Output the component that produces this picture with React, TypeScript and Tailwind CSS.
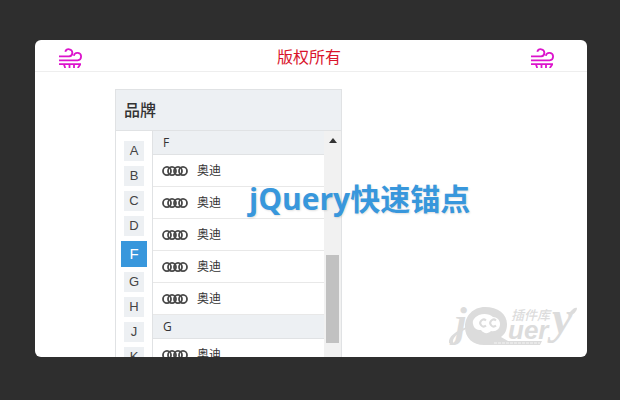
import React, { useState } from 'react'

interface Group {
  letter: string
  brands: string[]
}

const letters = ['A', 'B', 'C', 'D', 'F', 'G', 'H', 'J', 'K']

const groups: Group[] = [
  { letter: 'F', brands: ['奥迪', '奥迪', '奥迪', '奥迪', '奥迪'] },
  { letter: 'G', brands: ['奥迪'] },
]

const WindIcon: React.FC = () => (
  <svg width="24" height="20" viewBox="0 0 24 20" fill="none" stroke="#dc14cc" strokeWidth="1.8">
    <path d="M1 8.4h10.2a3.6 3.6 0 1 0-3.9-4.6" />
    <path d="M1 12.3h18.6a3.7 3.7 0 1 0-3.8-4.6" />
    <path d="M1 16.2h22" />
    <path d="M6 16.5l1.2 3.5M11.5 16.5v3.5M16 16.5v3.5M22.2 16.5l-2.4 3.5" />
  </svg>
)

const RingsIcon: React.FC = () => (
  <svg width="26" height="12" viewBox="0 0 26 12" fill="none" stroke="#484848" strokeWidth="1.8">
    {[5, 10, 16, 21].map(cx => (
      <ellipse key={cx} cx={cx} cy="6" rx="4" ry="4.2" />
    ))}
  </svg>
)

const Watermark: React.FC = () => (
  <svg width="134" height="50" viewBox="0 0 134 50" fill="#dcdcdc" aria-label="jQuery 插件库">
    <text
      x="9"
      y="33"
      fontSize="42"
      fontStyle="italic"
      fontWeight="700"
      fontFamily="'Liberation Serif', serif"
    >
      j
    </text>
    <path d="M3 40c-1-6 6-12 20-17l-1 2C11 30 6 35 7 40z" />
    <path
      fillRule="evenodd"
      d="M39 4c13 0 22 7 22 17 0 6-2 10-6 13l7 4h34l-2 4H38c-11 0-19-7-19-18S27 4 39 4zM33 12c-4 2-7 5-6 9s3 6 8 6c3 4 7 4 10 1 5 1 9-2 9-7 0-4-3-7-7-7-3-3-9-4-14-2z"
    />
    <g fill="none" stroke="#dcdcdc" strokeWidth="2">
      <path d="M40 17.5a3.4 3.4 0 1 0 0 5" />
      <path d="M50 17.5a3.4 3.4 0 1 0 0 5" />
    </g>
    <path d="M48 40h46" stroke="#f4f4f4" strokeWidth="1" strokeDasharray="3 1" />
    <text
      x="62"
      y="36"
      fontSize="26"
      fontWeight="700"
      fontStyle="italic"
      fontFamily="'Liberation Sans', sans-serif"
    >
      uer
    </text>
    <text
      x="65"
      y="17"
      fontSize="13"
      fontWeight="500"
      fontStyle="italic"
      fontFamily="'Noto Sans CJK SC', sans-serif"
    >
      插件库
    </text>
    <text
      x="106"
      y="30"
      fontSize="46"
      fontStyle="italic"
      fontWeight="700"
      fontFamily="'Liberation Serif', serif"
    >
      y
    </text>
    {/* tail of the y */}
    <path d="M124 9c3-4 6-5 7-4 0 3-3 6-7 8z" />
  </svg>
)

const App: React.FC = () => {
  const [active, setActive] = useState('F')

  return (
    <div className="h-screen bg-[#2e2e2e] pt-10 pb-[43px] pl-[35px] pr-[33px] font-['Open_Sans','Noto_Sans_CJK_SC',sans-serif] text-[#333]">
      <main className="relative flex h-full flex-col overflow-hidden rounded-md bg-white">
        <header className="grid h-8 shrink-0 grid-cols-3 items-center border-b border-[#eeeeee] pr-[33px] pl-[23px]">
          <button type="button" aria-label="返回" className="justify-self-start pt-1">
            <WindIcon />
          </button>
          <span className="pt-0.5 pl-1.5 text-center text-base text-[#d9142b]">版权所有</span>
          <button type="button" aria-label="菜单" className="justify-self-end pt-1">
            <WindIcon />
          </button>
        </header>

        <section className="mt-[17px] ml-20 flex min-h-0 w-[227px] flex-1 flex-col border-x border-t border-[#e0e2e4]">
          <h1 className="h-[41px] shrink-0 border-b border-[#e0e2e4] bg-[#edf0f3] px-2 text-base leading-10 font-medium">
            品牌
          </h1>

          <div className="flex min-h-0 flex-1 overflow-hidden">
            <nav className="flex w-9 shrink-0 flex-col items-center gap-[5px] pt-2.5 font-['Liberation_Sans',sans-serif] text-[#444]">
              {letters.map(letter => (
                <button
                  key={letter}
                  type="button"
                  onClick={() => setActive(letter)}
                  className={
                    letter === active
                      ? 'size-[26px] shrink-0 bg-[#3897dc] text-[15px] text-white'
                      : 'size-5 shrink-0 bg-[#edf0f3] text-[13px] leading-5'
                  }
                >
                  {letter}
                </button>
              ))}
            </nav>

            <div className="min-w-0 flex-1 border-l border-[#e0e2e4] text-xs">
              {groups.map(group => (
                <section key={group.letter}>
                  <h2 className="h-6 border-b border-[#e0e2e4] bg-[#edf0f3] px-2.5 leading-6">{group.letter}</h2>
                  <ul>
                    {group.brands.map((brand, i) => (
                      <li key={i} className="flex h-8 items-center gap-2 border-b border-[#e8e8e8] px-[9px]">
                        <RingsIcon />
                        <span className="pl-px">{brand}</span>
                      </li>
                    ))}
                  </ul>
                </section>
              ))}
            </div>

            <div className="flex w-[17px] shrink-0 flex-col items-center bg-[#f1f1f1] pt-[7px]">
              <svg width="8" height="5" viewBox="0 0 8 5" fill="#333333">
                <path d="M4 0l4 5H0z" />
              </svg>
              <div className="mt-28 h-[88px] w-[13px] shrink-0 bg-[#c1c1c1]" />
            </div>
          </div>
        </section>

        <p className="absolute top-[138px] left-[214px] text-[30px] leading-[42px] font-bold whitespace-nowrap text-[#3897dc] [text-shadow:1px_1px_2px_rgba(0,0,0,0.12)]">
          jQuery快速锚点
        </p>
        <div className="absolute right-[7px] bottom-1">
          <Watermark />
        </div>
      </main>
    </div>
  )
}

export default App
